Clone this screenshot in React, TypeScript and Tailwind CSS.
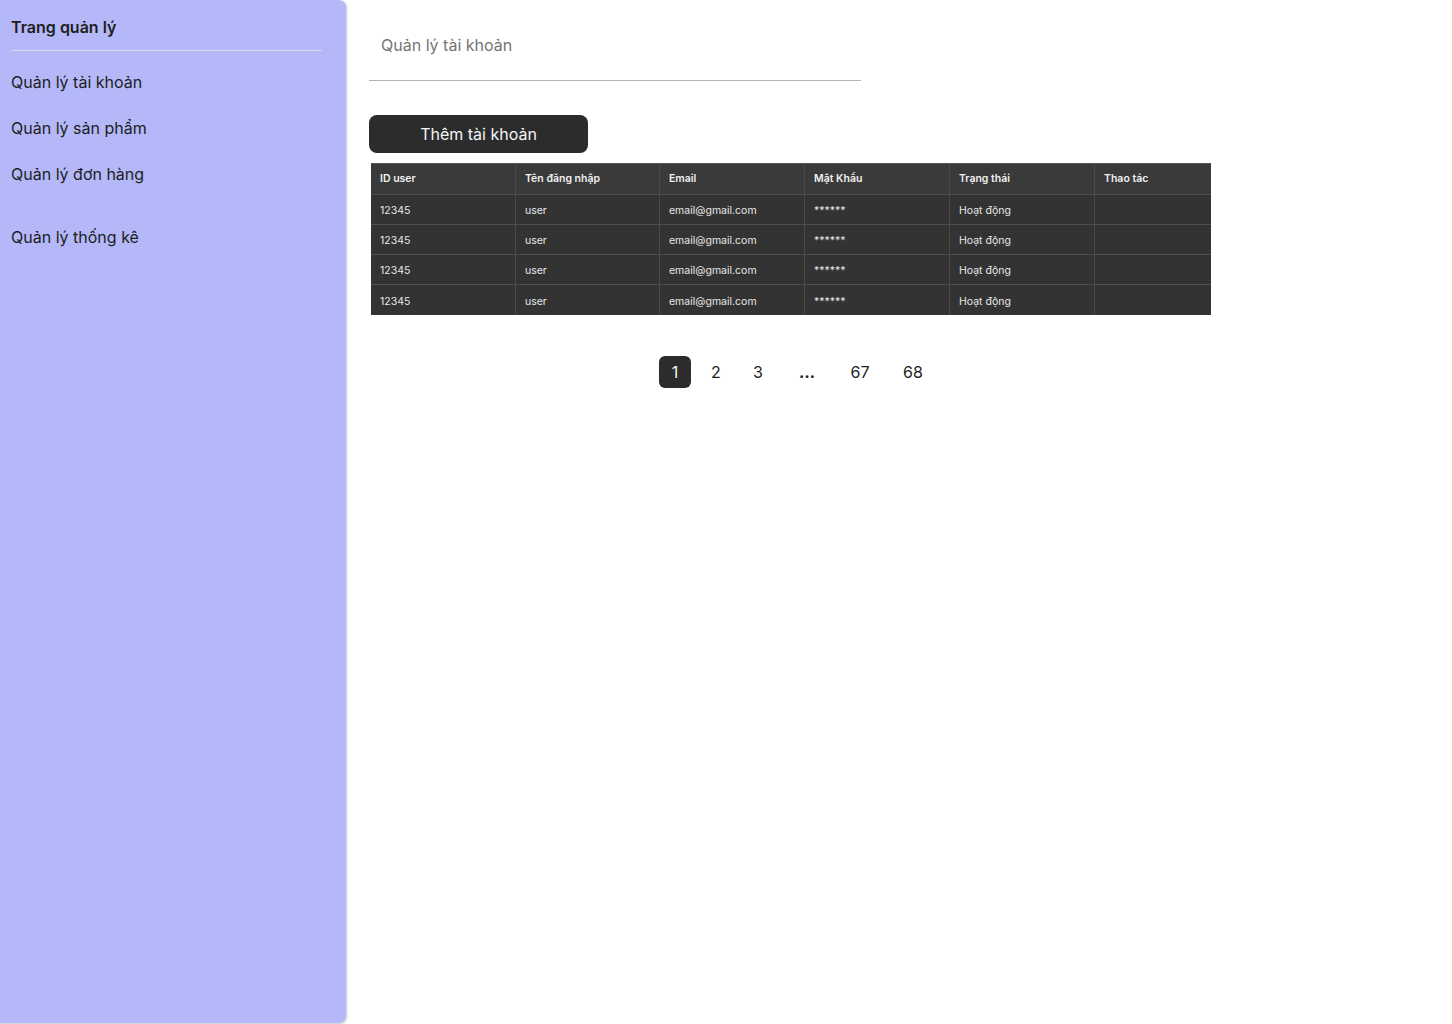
import React from "react";

const rows = Array.from({ length: 4 }, () => ({
  id: "12345",
  user: "user",
  email: "email@gmail.com",
  pass: "******",
  status: "Hoạt động",
}));

const cols = ["ID user", "Tên đăng nhập", "Email", "Mật Khẩu", "Trạng thái", "Thao tác"];
const widths = ["w-[145px]", "w-[144px]", "w-[145px]", "w-[145px]", "w-[145px]", "w-[116px]"];

export default function App() {
  return (
    <div className="flex w-[1452px] h-[1024px] bg-white text-[#1e1e1e]" style={{ fontFamily: "Inter, 'Noto Sans', sans-serif" }}>
      <aside className="w-[347px] h-[1024px] bg-[#b4b8f8] rounded-r-[8px] border-r border-b border-[#d6d6e0] shadow-[1px_1px_2px_rgba(0,0,0,0.08)] px-[11px] pt-[17px] shrink-0">
        <div className="w-[311px] text-[16px] font-semibold leading-[20px] pb-[13px] border-b border-[#d9d9d9]">Trang quản lý</div>
        <nav className="flex flex-col text-[16px] leading-[20px] text-[#1e1e1e]">
          <div className="mt-[21px]">Quản lý tài khoản</div>
          <div className="mt-[26px]">Quản lý sản phẩm</div>
          <div className="mt-[26px]">Quản lý đơn hàng</div>
          <div className="mt-[43px]">Quản lý thống kê</div>
        </nav>
      </aside>
      <main className="flex-1 pl-[22px] pt-[35px]">
        <div className="w-[492px] border-b border-[#b3b3b3] pl-[12px] pb-[25px] text-[16px] leading-[20px] text-[#757575]">Quản lý tài khoản</div>
        <button className="mt-[34px] w-[219px] h-[38px] rounded-[8px] bg-[#2c2c2c] text-[#f5f5f5] text-[16px] leading-[20px] flex items-center justify-center">Thêm tài khoản</button>
        <div className="mt-[10px] ml-[2px] w-[840px] bg-[#333333] border-t border-[#555]">
          <div className="flex h-[31px] bg-[#3a3a3a] border-b border-[#4e4e4e]">
            {cols.map((c, i) => (
              <div key={c} className={`${widths[i]} ${i < 5 ? "border-r border-[#4a4a4a]" : ""} flex items-center pl-[9px] text-[10.5px] font-semibold text-[#f0f0f0]`}>{c}</div>
            ))}
          </div>
          {rows.map((r, ri) => (
            <div key={ri} className={`flex h-[30px] ${ri < 3 ? "border-b border-[#4e4e4e]" : ""}`}>
              {[r.id, r.user, r.email, r.pass, r.status, ""].map((v, i) => (
                <div key={i} className={`${widths[i]} ${i < 5 ? "border-r border-[#4a4a4a]" : ""} flex items-center pl-[9px] pt-[3px] text-[10.5px] text-[#e8e8e8]`}>{v}</div>
              ))}
            </div>
          ))}
        </div>
        <div className="mt-[41px] ml-[290px] flex items-center text-[16px] leading-[20px] text-[#1e1e1e]">
          <div className="w-[32px] h-[32px] rounded-[6px] bg-[#2c2c2c] text-[#f5f5f5] flex items-center justify-center">1</div>
          <div className="w-[32px] h-[32px] ml-[9px] flex items-center justify-center">2</div>
          <div className="w-[32px] h-[32px] ml-[10px] flex items-center justify-center">3</div>
          <div className="w-[32px] h-[32px] ml-[17px] flex items-center justify-center font-bold">…</div>
          <div className="w-[32px] h-[32px] ml-[21px] flex items-center justify-center">67</div>
          <div className="w-[32px] h-[32px] ml-[21px] flex items-center justify-center">68</div>
        </div>
      </main>
    </div>
  );
}
